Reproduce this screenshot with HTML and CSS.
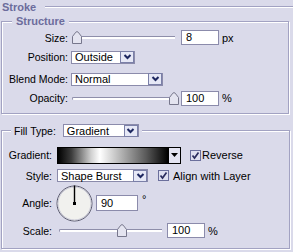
FILE: index.html
```html
<!DOCTYPE html>
<html lang="en">

<head>
    <meta charset="UTF-8">
    <title>Stroke</title>
    <link rel="stylesheet" href="styles.css">
</head>

<body>
    <div class="panel">
        <!-- Stroke header -->
        <div class="title"><span>Stroke</span><i class="rule"></i></div>

        <!-- Structure -->
        <fieldset class="group structure">
            <legend class="legend-text">Structure</legend>

            <div class="row row-size">
                <span class="label">Size:</span>
                <div class="slider">
                    <div class="track"></div>
                    <svg class="thumb" style="--v:0" width="10" height="13" viewBox="0 0 10 13">
                        <path d="M0.5 12.5 V5.5 L3.8 1.2 Q5 0 6.2 1.2 L9.5 5.5 V12.5 Z" fill="#e4e4f0" stroke="#77778c" />
                    </svg>
                </div>
                <div class="field">8</div>
                <span class="unit">px</span>
            </div>

            <div class="row row-pos">
                <span class="label">Position:</span>
                <div class="select w-pos">
                    <span>Outside</span>
                    <i class="arrow"><svg width="11" height="10" viewBox="0 0 11 10"><path d="M2.5 3 L5.5 6 L8.5 3" fill="none" stroke="#1d2760" stroke-width="2" /></svg></i>
                </div>
            </div>

            <div class="row row-blend">
                <span class="label">Blend Mode:</span>
                <div class="select w-blend">
                    <span>Normal</span>
                    <i class="arrow"><svg width="11" height="10" viewBox="0 0 11 10"><path d="M2.5 3 L5.5 6 L8.5 3" fill="none" stroke="#1d2760" stroke-width="2" /></svg></i>
                </div>
            </div>

            <div class="row row-opacity">
                <span class="label">Opacity:</span>
                <div class="slider">
                    <div class="track"></div>
                    <svg class="thumb" style="--v:1" width="10" height="13" viewBox="0 0 10 13">
                        <path d="M0.5 12.5 V5.5 L3.8 1.2 Q5 0 6.2 1.2 L9.5 5.5 V12.5 Z" fill="#e4e4f0" stroke="#77778c" />
                    </svg>
                </div>
                <div class="field">100</div>
                <span class="unit">%</span>
            </div>
        </fieldset>

        <!-- Fill -->
        <fieldset class="group fill">
            <legend class="legend-fill">
                <span>Fill Type:</span>
                <div class="select w-fill">
                    <span>Gradient</span>
                    <i class="arrow"><svg width="11" height="10" viewBox="0 0 11 10"><path d="M2.5 3 L5.5 6 L8.5 3" fill="none" stroke="#1d2760" stroke-width="2" /></svg></i>
                </div>
            </legend>

            <div class="row row-grad">
                <span class="label">Gradient:</span>
                <div class="gradient">
                    <div class="ramp"></div>
                    <i class="ramp-arrow"><svg width="7" height="4" viewBox="0 0 7 4"><path d="M0 0 H7 L3.5 4 Z" fill="#000" /></svg></i>
                </div>
                <label class="check"><i class="box"><svg width="9" height="9" viewBox="0 0 9 9"><path d="M1.5 4.5 L3.5 7 L7.5 1.5" fill="none" stroke="#2b2d5e" stroke-width="1.7" /></svg></i>Reverse</label>
            </div>

            <div class="row row-style">
                <span class="label">Style:</span>
                <div class="select w-style">
                    <span>Shape Burst</span>
                    <i class="arrow"><svg width="11" height="10" viewBox="0 0 11 10"><path d="M2.5 3 L5.5 6 L8.5 3" fill="none" stroke="#1d2760" stroke-width="2" /></svg></i>
                </div>
                <label class="check"><i class="box"><svg width="9" height="9" viewBox="0 0 9 9"><path d="M1.5 4.5 L3.5 7 L7.5 1.5" fill="none" stroke="#2b2d5e" stroke-width="1.7" /></svg></i>Align with Layer</label>
            </div>

            <div class="row row-angle">
                <span class="label">Angle:</span>
                <svg class="dial" width="37" height="37" viewBox="0 0 37 37">
                    <circle cx="18.5" cy="18.5" r="17.5" fill="#f1f1ee" stroke="#55556a" />
                    <circle cx="18.5" cy="18.5" r="16.5" fill="none" stroke="#c9c9d6" />
                    <line x1="18.5" y1="18.5" x2="18.5" y2="0.5" stroke="#000" stroke-width="1.4" />
                    <rect x="17" y="17" width="3" height="3" fill="#000" />
                </svg>
                <div class="field w-angle">90</div>
                <span class="deg">&deg;</span>
            </div>

            <div class="row row-scale">
                <span class="label">Scale:</span>
                <div class="slider scale">
                    <div class="track"></div>
                    <svg class="thumb" style="--v:0.6" width="10" height="13" viewBox="0 0 10 13">
                        <path d="M0.5 12.5 V5.5 L3.8 1.2 Q5 0 6.2 1.2 L9.5 5.5 V12.5 Z" fill="#e4e4f0" stroke="#77778c" />
                    </svg>
                </div>
                <div class="field">100</div>
                <span class="unit">%</span>
            </div>
        </fieldset>
    </div>
</body>

</html>
```

FILE: styles.css
```css
/* Basis */
html,
body {
    margin: 0;
    padding: 0;
    background: #dadaea;
    font-family: "Liberation Sans", Arial, sans-serif;
    font-size: 10.5px;
    color: #000;
}

.panel {
    width: 293px;
    height: 252px;
    padding-left: 1px;
    box-sizing: border-box;
    overflow: hidden;
}

/* Stroke header */
.title {
    display: flex;
    align-items: center;
    height: 13px;
    padding-left: 1px;
    color: #6c6c9c;
    font-weight: bold;
    font-size: 11px;
}

.title .rule {
    flex: 1;
    margin: 0 -1px 0 9px;
    border-top: 1px solid #a2a2c2;
    border-bottom: 1px solid #fff;
}

/* Groepen */
.group {
    margin: 0;
    padding: 0;
    min-width: 0;
    border: 1px solid #a2a2c2;
    box-shadow: inset 1px 1px 0 #fff, 1px 1px 0 #fff;
}

.structure {
    margin-top: 2px;
    width: 288px;
    box-sizing: border-box;
    padding-bottom: 7px;
}

.fill {
    margin-top: 10px;
    width: 289px;
    box-sizing: border-box;
    padding-bottom: 8px;
}

.legend-text {
    margin-left: 10px;
    padding: 0 4px;
    height: 13px;
    line-height: 13px;
    background: #dadaea;
    color: #6c6c9c;
    font-weight: bold;
    font-size: 11px;
}

.legend-fill {
    display: flex;
    align-items: center;
    gap: 7px;
    margin-left: 9px;
    padding: 0 3px;
    height: 13px;
    background: #dadaea;
}

/* Rijen */
.row {
    display: flex;
    align-items: center;
}

.structure .label {
    width: 66px;
    margin-right: 3px;
    text-align: right;
}

.fill .label {
    width: 50px;
    margin-right: 5px;
    text-align: right;
}

.row-size {
    margin-top: 1px;
    height: 17px;
}

.row-pos,
.row-blend {
    height: 22px;
}

.row-opacity {
    height: 16px;
}

.row-grad {
    margin-top: 7px;
    height: 22px;
}

.row-style {
    height: 19px;
}

.row-angle {
    height: 36px;
}

.row-scale {
    height: 19px;
}

/* Slider */
.slider {
    position: relative;
    width: 107px;
    height: 13px;
    margin-left: 1px;
    margin-right: 2px;
}

.slider.scale {
    margin-left: 2px;
    margin-right: 1px;
}

.track {
    position: absolute;
    left: 0;
    right: 4px;
    top: 5px;
    height: 2px;
    border-top: 1px solid #8e8eaa;
    border-left: 1px solid #8e8eaa;
    border-radius: 2px 0 0 2px;
    background: #fff;
}

/* thumb-positie uit de waarde (0..1) */
.thumb {
    position: absolute;
    top: 0;
    left: calc(var(--v) * (100% - 10px));
}

/* Invoervelden */
.field {
    width: 38px;
    height: 15px;
    box-sizing: border-box;
    padding-left: 4px;
    line-height: 13px;
    background: #fff;
    border: 1px solid #8b8bab;
    font-size: 11px;
}

.w-angle {
    width: 42px;
    height: 16px;
    line-height: 14px;
}

.unit {
    margin-left: 3px;
    font-size: 11px;
}

.deg {
    align-self: flex-start;
    margin: 8px 0 0 4px;
    font-size: 11px;
}

/* Dropdowns */
.select {
    display: flex;
    align-items: center;
    justify-content: space-between;
    height: 13px;
    box-sizing: border-box;
    padding-left: 3px;
    background: #fff;
    border: 1px solid #8b8bab;
    font-size: 11px;
}

.select .arrow {
    display: flex;
    align-items: center;
    justify-content: center;
    width: 12px;
    height: 10px;
    border: 1px solid #7b80a8;
    background: #e6e8f6;
}

.w-pos {
    width: 64px;
}

.w-blend {
    width: 92px;
}

.w-fill {
    width: 76px;
}

.w-style {
    width: 91px;
    margin-right: 10px;
}

/* Verloop */
.gradient {
    display: flex;
    width: 124px;
    height: 17px;
    box-sizing: border-box;
    border: 1px solid #000;
    margin-right: 9px;
    background: #e4e4f2;
}

.ramp {
    flex: 1;
    background: linear-gradient(to right, #000 0%, #3a3a3a 12%, #d0d0d0 30%, #fff 38%, #bcbcbc 55%, #5a5a5a 80%, #000 100%);
}

.ramp-arrow {
    display: flex;
    align-items: center;
    justify-content: center;
    width: 11px;
    border-left: 1px solid #000;
}

/* Checkbox */
.check {
    display: flex;
    align-items: center;
    gap: 1px;
    font-size: 11px;
}

.check .box {
    display: flex;
    align-items: center;
    justify-content: center;
    width: 11px;
    height: 11px;
    box-sizing: border-box;
    border: 1px solid #6b6f9c;
    background: #dfe0f0;
}

.row-style .check {
    gap: 4px;
}

/* Hoek */
.dial {
    margin-left: -1px;
    margin-right: 3px;
}
```
